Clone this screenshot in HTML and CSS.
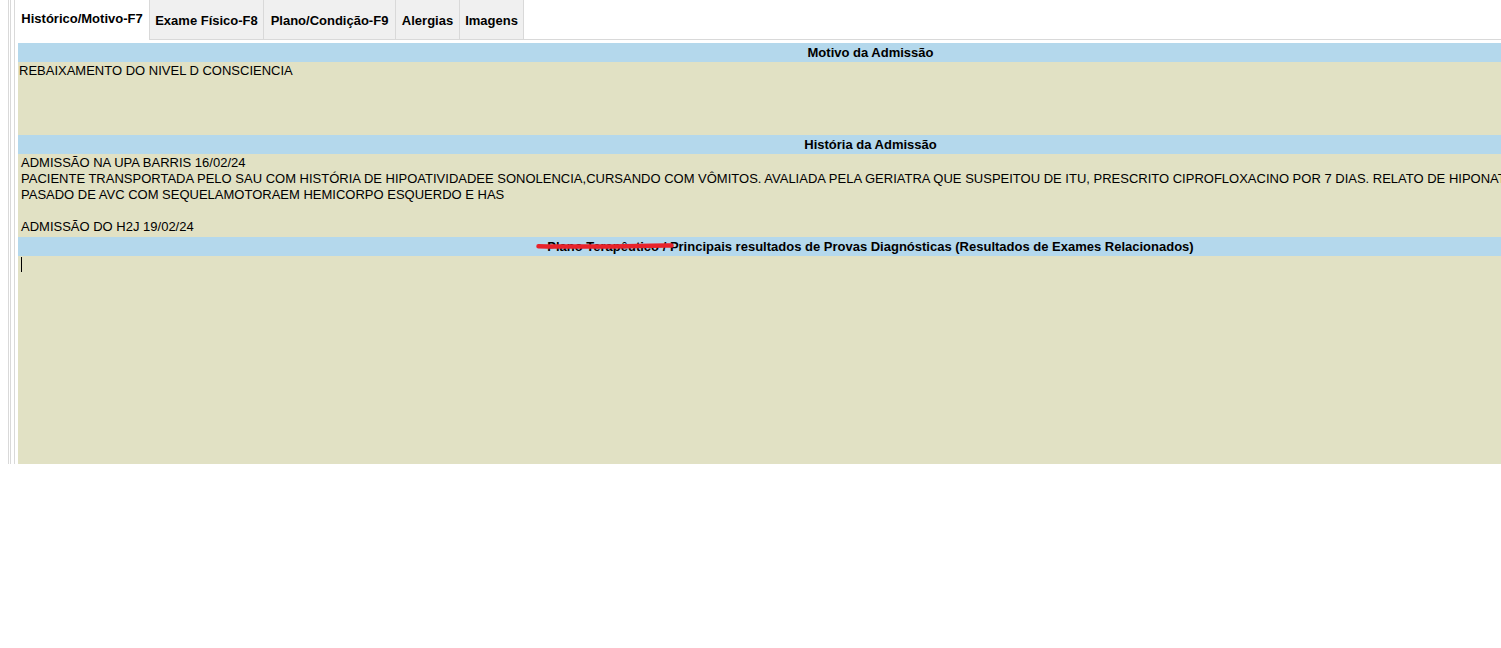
FILE: index.html
```html
<!DOCTYPE html>
<html lang="pt-BR">
<head>
<meta charset="utf-8">
<title>Admissão</title>
<link rel="stylesheet" href="styles.css">
</head>
<body>
<div class="viewport">
  <div class="rail">
    <div class="rail-inner">
      <div class="panel">
        <ul class="tabs">
          <li class="tab tab-historico active">Histórico/Motivo-F7</li>
          <li class="tab tab-exame">Exame Físico-F8</li>
          <li class="tab tab-plano">Plano/Condição-F9</li>
          <li class="tab tab-alergias">Alergias</li>
          <li class="tab tab-imagens">Imagens</li>
        </ul>
        <div class="content">
          <div class="section-title">Motivo da Admissão</div>
          <div class="field field-motivo">REBAIXAMENTO DO NIVEL D CONSCIENCIA</div>
          <div class="section-title">História da Admissão</div>
          <div class="field field-historia">ADMISSÃO NA UPA BARRIS 16/02/24
PACIENTE TRANSPORTADA PELO SAU COM HISTÓRIA DE HIPOATIVIDADEE SONOLENCIA,CURSANDO COM VÔMITOS. AVALIADA PELA GERIATRA QUE SUSPEITOU DE ITU, PRESCRITO CIPROFLOXACINO POR 7 DIAS. RELATO DE HIPONATREMIA.
PASADO DE AVC COM SEQUELAMOTORAEM HEMICORPO ESQUERDO E HAS

ADMISSÃO DO H2J 19/02/24</div>
          <div class="section-title"><span class="struck">Plano Terapêutico / <svg class="scribble" width="138" height="10" viewBox="0 0 138 10"><path d="M2.5 5.2 C 30 5.8, 60 5.6, 90 5.2 S 122 4.4, 135.5 4.6" fill="none" stroke="#e8232b" stroke-width="4.5" stroke-linecap="round"/></svg></span>Principais resultados de Provas Diagnósticas (Resultados de Exames Relacionados)</div>
          <div class="field field-plano"><span class="caret"></span></div>
        </div>
      </div>
    </div>
  </div>
</div>
</body>
</html>
```

FILE: styles.css
```css
html, body {
  margin: 0;
  padding: 0;
  background: #ffffff;
}

body {
  font-family: "Liberation Sans", Arial, sans-serif;
  font-size: 13px;
  color: #000;
}

.viewport {
  width: 100%;
  overflow: hidden;
}

.rail {
  margin-left: 8px;
  border-left: 1px solid #d9d9d9;
  padding-left: 1px;
  height: 464px;
  width: 1713px;
}

.rail-inner {
  border-left: 1px solid #d9d9d9;
  padding-left: 3px;
  height: 100%;
}

.panel {
  border-left: 1px solid #d9d9d9;
  height: 100%;
}

.tabs {
  list-style: none;
  margin: 0;
  padding: 0;
  display: flex;
  height: 39px;
  border-bottom: 1px solid #d9d9d9;
}

.tab {
  font-weight: bold;
  line-height: 16px;
  padding-top: 13px;
  background: #f0f0f0;
  border-right: 1px solid #d9d9d9;
  white-space: nowrap;
  text-align: center;
  box-sizing: border-box;
  flex: none;
}

.tab.active {
  background: #ffffff;
  padding-top: 11px;
  height: 40px;
  margin-bottom: -1px;
}

.tab-historico { width: 135px; }
.tab-exame { width: 114px; }
.tab-plano { width: 132px; }
.tab-alergias { width: 64px; }
.tab-imagens { width: 64px; }

.content {
  padding: 3px 0 0 3px;
}

.section-title {
  background: #b4d8ec;
  height: 19px;
  line-height: 19px;
  text-align: center;
  font-weight: bold;
  white-space: nowrap;
}

.struck {
  position: relative;
}

.scribble {
  position: absolute;
  left: -11px;
  top: 2px;
}

.field {
  background: #e1e1c4;
  line-height: 16px;
  white-space: pre-wrap;
  box-sizing: border-box;
}

.field-motivo {
  height: 73px;
  padding: 1px 1px;
}

.field-historia {
  height: 83px;
  padding: 1px 3px;
}

.field-plano {
  height: 208px;
  padding: 1px 3px;
}

.caret {
  display: inline-block;
  width: 1px;
  height: 15px;
  background: #000;
  vertical-align: top;
}
```
